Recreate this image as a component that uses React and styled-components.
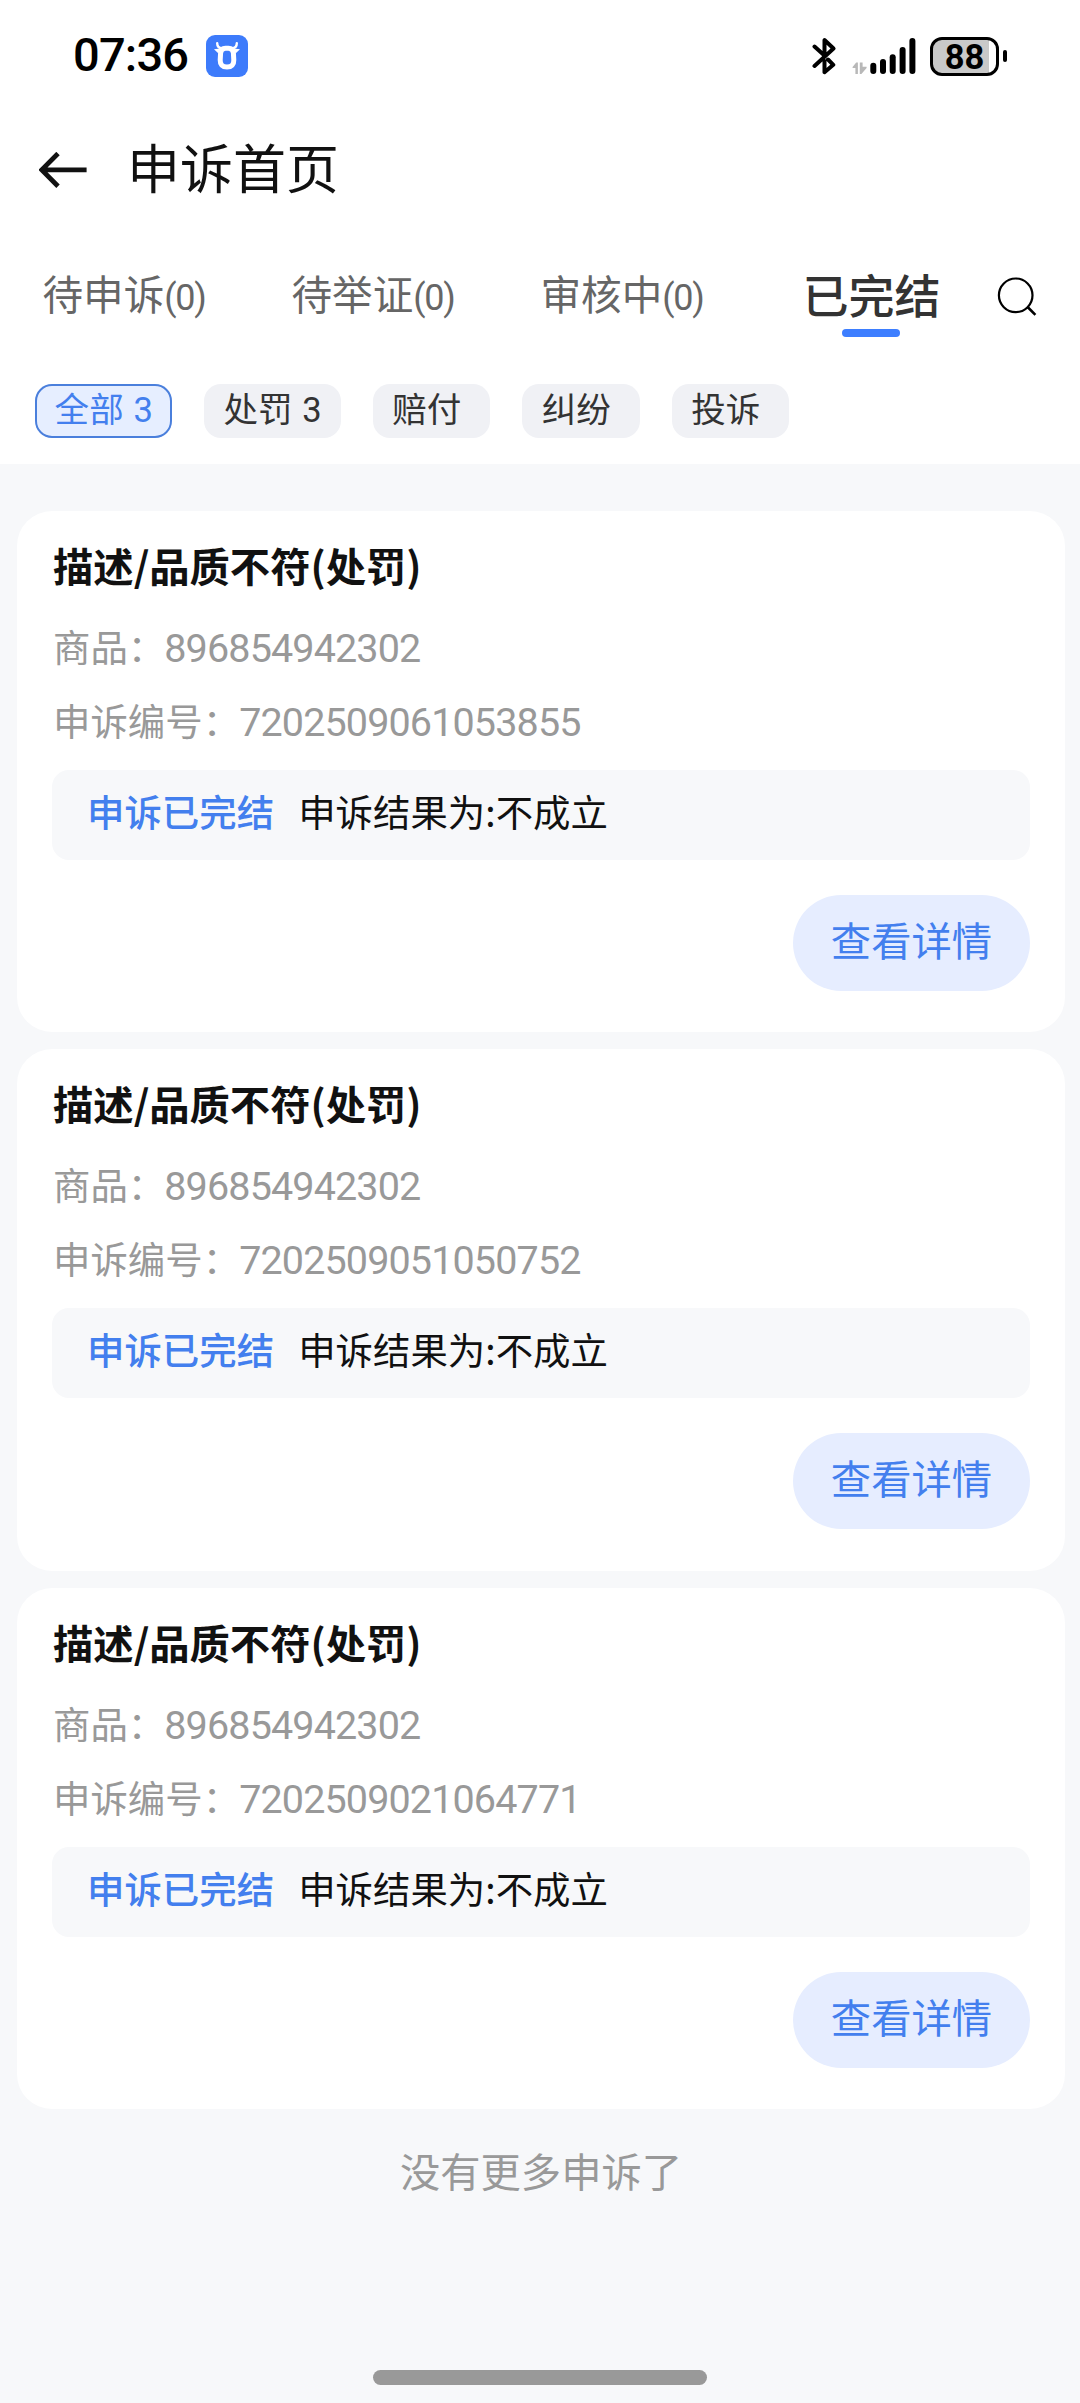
import { Fragment } from "react";
import styled, { createGlobalStyle } from "styled-components";

const tabs = [
  { label: "待申诉", count: "(0)" },
  { label: "待举证", count: "(0)" },
  { label: "审核中", count: "(0)" },
  { label: "已完结", active: true },
];

const filters = [
  { label: "全部", count: 3, active: true },
  { label: "处罚", count: 3 },
  { label: "赔付" },
  { label: "纠纷" },
  { label: "投诉" },
];

const appeals = [
  { id: "7202509061053855", product: "896854942302" },
  { id: "7202509051050752", product: "896854942302" },
  { id: "7202509021064771", product: "896854942302" },
];

export default function App() {
  return (
    <Fragment>
      <GlobalStyle />
      <Page>
        <Top>
          <StatusBar />
          <Header>
            <BackIcon />
            <h1>申诉首页</h1>
          </Header>
          <Tabs>
            {tabs.map((tab) => (
              <Tab key={tab.label} $active={tab.active}>
                <span>
                  {tab.label}
                  {tab.count && <TabCount>{tab.count}</TabCount>}
                </span>
              </Tab>
            ))}
            <SearchIcon />
          </Tabs>
          <Filters>
            {filters.map((filter) => (
              <Chip key={filter.label} $active={filter.active}>
                {filter.label + " "}
                {filter.count && <ChipCount>{filter.count}</ChipCount>}
              </Chip>
            ))}
          </Filters>
        </Top>
        <List>
          {appeals.map((appeal) => (
            <AppealCard key={appeal.id} appeal={appeal} />
          ))}
        </List>
        <NoMore>没有更多申诉了</NoMore>
        <HomeBar />
      </Page>
    </Fragment>
  );
}

function AppealCard({ appeal }) {
  return (
    <Card>
      <h2>描述/品质不符(处罚)</h2>
      <Info>
        商品：<Digits>{appeal.product}</Digits>
      </Info>
      <Info>
        申诉编号：<Digits>{appeal.id}</Digits>
      </Info>
      <Result>
        <strong>申诉已完结</strong>
        <span>申诉结果为:不成立</span>
      </Result>
      <DetailButton>查看详情</DetailButton>
    </Card>
  );
}

function StatusBar() {
  return (
    <Status>
      <Clock>07:36</Clock>
      <AppBadge />
      <Indicators>
        <BluetoothIcon />
        <SignalIcon />
        <Battery>
          <span>88</span>
        </Battery>
        <BatteryTip />
      </Indicators>
    </Status>
  );
}

function AppBadge() {
  return (
    <svg width="42" height="42" viewBox="0 0 42 42">
      <rect width="42" height="42" rx="9" fill="#3d7bfb" />
      <path
        d="M11.2 8.2 C11.2 11.5 13 13 16 13.2 M30.8 8.2 C30.8 11.5 29 13 26 13.2"
        fill="none"
        stroke="#fff"
        strokeWidth="2.4"
        strokeLinecap="round"
      />
      <path d="M8 14.2 L14 13.4 L12.5 18.6 Z M34 14.2 L28 13.4 L29.5 18.6 Z" fill="#fff" />
      <path
        d="M19.5 13.2 H22.5 Q27 13.2 27.4 18 L27.8 25 Q28 32 21 32 Q14 32 14.2 25 L14.6 18 Q15 13.2 19.5 13.2 Z"
        fill="none"
        stroke="#fff"
        strokeWidth="5"
        strokeLinejoin="round"
      />
    </svg>
  );
}

function BluetoothIcon() {
  return (
    <svg width="24" height="38" viewBox="0 0 24 38">
      <path
        d="M2.5 9.5 L13 19 M2.5 29 L21.5 11.5 L12.5 3 V18 M16 22.5 L21.3 27.8 L12.5 35.2 V24"
        fill="none"
        stroke="#000"
        strokeWidth="4"
        strokeLinecap="round"
        strokeLinejoin="round"
      />
    </svg>
  );
}

function SignalIcon() {
  return (
    <svg width="64" height="38" viewBox="0 0 64 38">
      <path
        d="M5.9 25.4 V37 H3.4 V31 H0.6 V30 L4.2 25.4 Z M7.8 25.4 V37 H9.4 L14.6 31 V29.8 H10.6 V25.4 Z"
        fill="#b8b8b8"
      />
      <g stroke="#000" strokeWidth="6" strokeLinecap="round">
        <path d="M21.3 28.7 V34" />
        <path d="M31 25 V34" />
        <path d="M40.7 20.3 V34" />
        <path d="M50.6 13 V34" />
        <path d="M60.4 4 V34" />
      </g>
    </svg>
  );
}

function BackIcon() {
  return (
    <svg width="48" height="36" viewBox="0 0 48 36">
      <path
        d="M19 1.5 L2.8 17.9 L19 34.3 M2.8 17.9 H47.6"
        fill="none"
        stroke="#111"
        strokeWidth="4.8"
      />
    </svg>
  );
}

function SearchIcon() {
  return (
    <svg width="42" height="44" viewBox="0 0 42 44">
      <circle cx="19.7" cy="22.3" r="16.8" fill="none" stroke="#000" strokeWidth="2.2" />
      <path d="M31.6 34 L39.4 41.8" stroke="#000" strokeWidth="2.6" />
    </svg>
  );
}

const GlobalStyle = createGlobalStyle`
  * {
    box-sizing: border-box;
    margin: 0;
    padding: 0;
  }

  body {
    background: #f7f8fa;
    font-family: "Noto Sans CJK SC", "Noto Sans", sans-serif;
  }

  svg {
    display: block;
    flex-shrink: 0;
  }
`;

const Page = styled.div`
  width: 1080px;
  height: 2403px;
  display: flex;
  flex-direction: column;
  overflow: hidden;
`;

const Top = styled.div`
  background: #fff;
  height: 464px;
`;

const Status = styled.div`
  height: 111px;
  padding: 1px 73px 0 73px;
  display: flex;
  align-items: center;
`;

const Clock = styled.span`
  width: 133px;
  margin-top: -3px;
  font-family: Roboto, sans-serif;
  font-weight: 500;
  font-size: 47px;
  letter-spacing: -0.8px;
  color: #000;
`;

const Indicators = styled.div`
  margin-left: auto;
  display: flex;
  align-items: center;

  svg + svg {
    margin-left: 16px;
  }
`;

const Battery = styled.div`
  width: 69px;
  height: 39px;
  margin-left: 14px;
  border: 3px solid #000;
  border-radius: 12px;
  background: linear-gradient(to right, #c9c9c9 56px, #fff 56px);
  display: flex;
  align-items: center;
  justify-content: center;
  font-family: Roboto, sans-serif;
  font-weight: 700;
  font-size: 34.5px;
  line-height: 35px;
  color: #000;

  span {
    margin-top: 2px;
  }
`;

const BatteryTip = styled.div`
  width: 4px;
  height: 12px;
  margin-left: 4px;
  border-radius: 2px;
  background: #000;
`;

const Header = styled.div`
  height: 118px;
  padding: 0 0 0 39px;
  display: flex;
  align-items: center;

  h1 {
    margin: -9px 0 0 40px;
    font-weight: 400;
    font-size: 53px;
    line-height: 80px;
    color: #111;
  }
`;

const Tabs = styled.div`
  height: 132px;
  display: flex;
  align-items: center;
`;

const Tab = styled.div`
  position: relative;
  width: 249px;
  height: 100px;
  padding-right: ${({ $active }) => ($active ? 0 : 1)}px;
  display: flex;
  justify-content: center;
  font-size: ${({ $active }) => ($active ? 46 : 40.6)}px;
  font-weight: ${({ $active }) => ($active ? 500 : 400)};
  line-height: 96px;
  color: ${({ $active }) => ($active ? "#333" : "#666")};
  white-space: nowrap;

  &::after {
    content: "";
    display: ${({ $active }) => ($active ? "block" : "none")};
    position: absolute;
    left: 95px;
    bottom: 8px;
    width: 58px;
    height: 8px;
    border-radius: 4px;
    background: #3d7eff;
  }
`;

const TabCount = styled.span`
  font-family: Roboto, sans-serif;
  font-size: 36px;
  letter-spacing: -1.3px;
  line-height: 1;
`;

const Filters = styled.div`
  padding: 23px 35px 0;
  display: flex;
  gap: 32px;
`;

const Chip = styled.div`
  height: 54px;
  padding: 0 19px 0 19.6px;
  border-radius: 17px;
  background: ${({ $active }) => ($active ? "#e6eeff" : "#f0f1f5")};
  box-shadow: ${({ $active }) => ($active ? "inset 0 0 0 2px #4a7fdc" : "none")};
  font-size: 34.56px;
  line-height: 47px;
  word-spacing: 2px;
  color: ${({ $active }) => ($active ? "#437fee" : "#333")};
  white-space: pre;
`;

const ChipCount = styled.span`
  font-family: Roboto, sans-serif;
  font-size: 34.5px;
  line-height: 1;
`;

const List = styled.div`
  padding: 47px 15px 0 17px;
  display: flex;
  flex-direction: column;
  gap: 17px;
`;

const Card = styled.div`
  height: 521.4px;
  padding: 30px 35px 0;
  border-radius: 35px;
  background: #fff;
  display: flex;
  flex-direction: column;

  h2 {
    margin: 0 0 20px 1px;
    font-weight: 700;
    font-size: 40.32px;
    line-height: 48px;
    color: #111;
  }
`;

const Info = styled.p`
  height: 74px;
  padding-left: 1px;
  font-size: 37.44px;
  line-height: 74px;
  color: #999;
  white-space: nowrap;
`;

const Digits = styled.span`
  margin-left: -1px;
  font-family: Roboto, sans-serif;
  font-size: 39.5px;
  letter-spacing: -0.86px;
  line-height: 1;
`;

const Result = styled.div`
  height: 90px;
  margin-top: 13px;
  padding: 0 35px;
  border-radius: 17px;
  background: #f7f8fa;
  display: flex;
  gap: 24px;
  font-size: 37.44px;
  line-height: 82px;
  color: #111;

  strong {
    font-weight: 500;
    color: #437fee;
  }
`;

const DetailButton = styled.button`
  width: 237px;
  height: 96px;
  margin-top: 35px;
  padding-bottom: 8px;
  align-self: flex-end;
  border: none;
  border-radius: 48px;
  background: #e6edff;
  font-family: inherit;
  font-size: 40.32px;
  line-height: 88px;
  color: #437fee;
`;

const NoMore = styled.p`
  margin-top: 31px;
  padding-left: 2px;
  font-size: 40.32px;
  line-height: 60px;
  text-align: center;
  color: #999;
`;

const HomeBar = styled.div`
  width: 334px;
  height: 15px;
  margin: auto auto 18px;
  border-radius: 8px;
  background: #999;
`;
